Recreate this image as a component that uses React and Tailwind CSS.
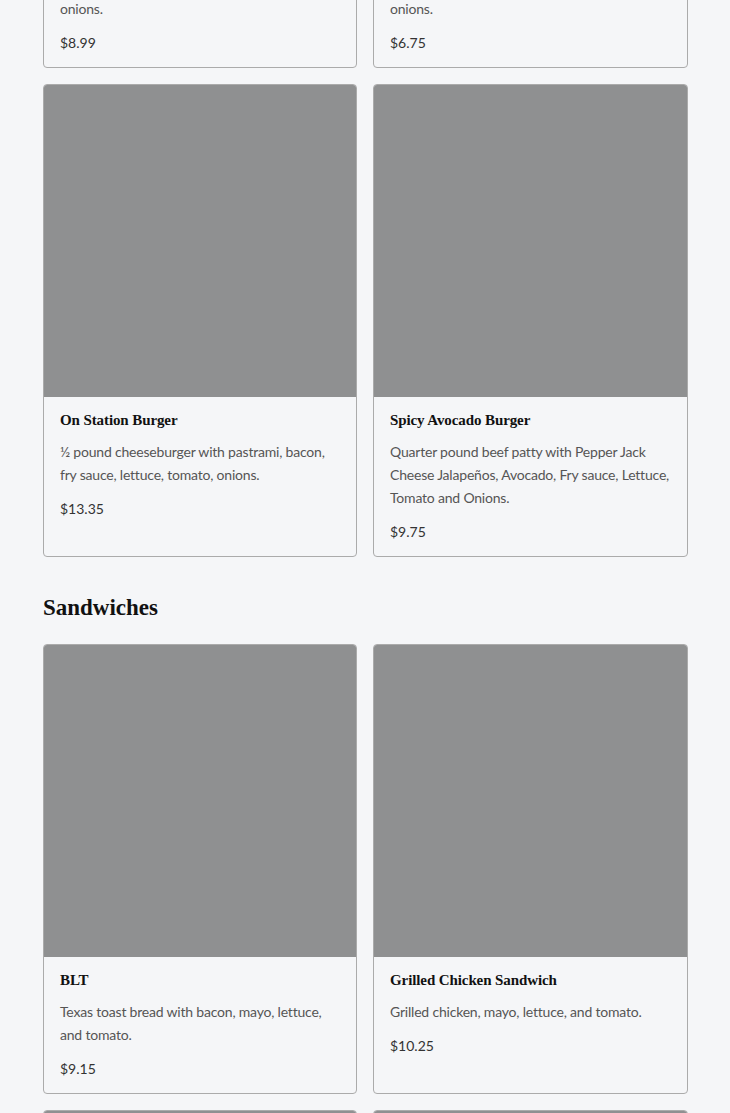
import React from "react";

const burgers = [
  {
    name: "Cheeseburger",
    desc: ["⅓ pound cheeseburger with fry sauce,", "lettuce, pickles, American cheese,", "onions."],
    price: "$8.99",
  },
  {
    name: "Hamburger",
    desc: ["Quarter pound beef patty with fry sauce,", "lettuce, tomato, pickles and", "onions."],
    price: "$6.75",
  },
  {
    name: "On Station Burger",
    desc: "½ pound cheeseburger with pastrami, bacon, fry sauce, lettuce, tomato, onions.",
    price: "$13.35",
  },
  {
    name: "Spicy Avocado Burger",
    desc: [
      "Quarter pound beef patty with Pepper Jack",
      "Cheese Jalapeños, Avocado, Fry sauce, Lettuce,",
      "Tomato and Onions.",
    ],
    price: "$9.75",
  },
];

const sandwiches = [
  { name: "BLT", desc: "Texas toast bread with bacon, mayo, lettuce, and tomato.", price: "$9.15" },
  { name: "Grilled Chicken Sandwich", desc: "Grilled chicken, mayo, lettuce, and tomato.", price: "$10.25" },
  { name: "Turkey Club", desc: "Turkey, bacon, mayo, lettuce, and tomato.", price: "$10.50" },
  { name: "Philly Cheesesteak", desc: "Shaved steak, peppers, onions and cheese.", price: "$11.25" },
];

function MenuCard({ item }) {
  return (
    <div className="flex flex-col border border-[#ababab] rounded-[4px] overflow-hidden bg-[#f5f6f8]">
      <div className="h-[312px] bg-[#8f9091]" />
      <div className="px-4 pt-[13px] pb-[13px]">
        <div className="font-['Liberation_Serif',serif] font-bold text-[15px] leading-5 text-[#111] tracking-[-0.1px]">
          {item.name}
        </div>
        <p className="mt-[10px] font-['Lato',sans-serif] text-[14px] leading-[23px] tracking-[-0.2px] text-[#555]">
          {Array.isArray(item.desc)
            ? item.desc.map((line, i) => (
                <React.Fragment key={i}>
                  {line}
                  {i < item.desc.length - 1 && <br />}
                </React.Fragment>
              ))
            : item.desc}
        </p>
        <div className="mt-[11px] font-['Lato',sans-serif] text-[14px] leading-[23px] text-[#333]">
          {item.price}
        </div>
      </div>
    </div>
  );
}

export default function App() {
  return (
    <div className="min-h-screen bg-[#f5f6f8] overflow-hidden">
      <div className="w-[645px] ml-[43px] -mt-[405px]">
        <div className="grid grid-cols-[314px_315px] gap-4">
          {burgers.map((b) => (
            <MenuCard key={b.name} item={b} />
          ))}
        </div>
        <h2 className="mt-[37px] mb-[22px] font-['Liberation_Serif',serif] font-bold text-[23px] leading-[28px] text-[#111]">
          Sandwiches
        </h2>
        <div className="grid grid-cols-[314px_315px] gap-4 pb-10">
          {sandwiches.map((s) => (
            <MenuCard key={s.name} item={s} />
          ))}
        </div>
      </div>
    </div>
  );
}
